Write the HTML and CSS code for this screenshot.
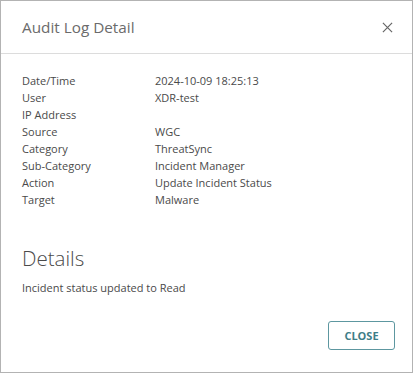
FILE: index.html
```html
<!DOCTYPE html>
<html lang="en">
<head>
    <meta charset="UTF-8">
    <title>Audit Log Detail</title>
    <link rel="stylesheet" href="styles.css">
</head>
<body>
    <div class="dialog">
        <div class="dialog-header">
            <h1 class="dialog-title">Audit Log Detail</h1>
            <button class="dialog-close" aria-label="Close">
                <svg width="11" height="11" viewBox="0 0 12 12">
                    <path d="M1 1 L11 11 M11 1 L1 11" stroke="#666" stroke-width="1.3" fill="none"/>
                </svg>
            </button>
        </div>
        <div class="dialog-body">
            <div class="detail-grid">
                <div class="label">Date/Time</div><div class="value">2024-10-09 18:25:13</div>
                <div class="label">User</div><div class="value">XDR-test</div>
                <div class="label">IP Address</div><div class="value"></div>
                <div class="label">Source</div><div class="value">WGC</div>
                <div class="label">Category</div><div class="value">ThreatSync</div>
                <div class="label">Sub-Category</div><div class="value">Incident Manager</div>
                <div class="label">Action</div><div class="value">Update Incident Status</div>
                <div class="label">Target</div><div class="value">Malware</div>
            </div>
            <h2 class="section-title">Details</h2>
            <p class="details-text">Incident status updated to Read</p>
        </div>
        <div class="dialog-footer">
            <button class="btn-close">CLOSE</button>
        </div>
    </div>
</body>
</html>
```

FILE: styles.css
```css
body {
    margin: 0;
    font-family: "Open Sans", Arial, sans-serif;
    background-color: white;
}
.dialog {
    width: 413px;
    height: 373px;
    box-sizing: border-box;
    border: 1px solid #b3b3b3;
    display: flex;
    flex-direction: column;
    color: #4a4a4a;
}
.dialog-header {
    height: 53px;
    box-sizing: border-box;
    border-bottom: 1px solid #dcdcdc;
    display: flex;
    align-items: center;
    justify-content: space-between;
    padding: 0 17px 0 21px;
}
.dialog-title {
    margin: 0;
    font-size: 15.3px;
    font-weight: 400;
    color: #6b6b6b;
}
.dialog-close {
    border: none;
    background: none;
    padding: 2px;
    display: flex;
    cursor: pointer;
}
.dialog-body {
    flex: 1;
    padding: 18px 21px 0 21px;
}
.detail-grid {
    display: grid;
    grid-template-columns: 133px 1fr;
    grid-auto-rows: 17px;
    font-size: 11px;
    line-height: 17px;
}
.section-title {
    margin: 35px 0 0 0;
    font-family: "Open Sans", Arial, sans-serif;
    font-size: 20.5px;
    font-weight: 300;
    line-height: 30px;
    color: #4a4a4a;
}
.details-text {
    margin: 6px 0 0 0;
    font-size: 11px;
    line-height: 17px;
}
.dialog-footer {
    display: flex;
    justify-content: flex-end;
    padding: 0 17px 22px 0;
}
.btn-close {
    width: 67px;
    height: 29px;
    border: 1px solid #5d97a0;
    border-radius: 3px;
    background: white;
    color: #3e7d87;
    font-family: "Open Sans", Arial, sans-serif;
    font-size: 11px;
    font-weight: 700;
    cursor: pointer;
}
```
